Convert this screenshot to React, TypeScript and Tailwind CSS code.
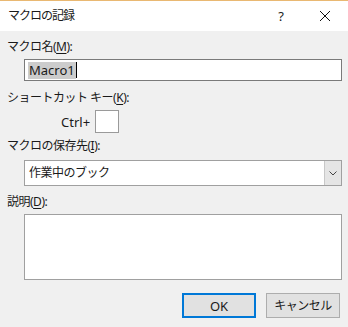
import React from 'react';

const font = { fontFamily: '"Noto Sans", "Noto Sans CJK JP", sans-serif' };

const U: React.FC<{ c: string }> = ({ c }) => <span className="underline underline-offset-2">{c}</span>;

const App: React.FC = () => {
    return (
        <div className="w-[348px] h-[327px] bg-[#f0f0f0] text-[12px] leading-[16px] text-[#1a1a1a] overflow-hidden" style={font}>
            {/* title bar */}
            <div className="h-[31px] bg-white border-t border-[#e9b872] flex items-center pl-[8px]">
                <span className="flex-1 tracking-[-1px]">マクロの記録</span>
                <span className="w-[16px] text-center mr-[30px] text-[13px]">?</span>
                <svg width="12" height="12" viewBox="0 0 12 12" className="mr-[17px]">
                    <path d="M1 1L11 11M11 1L1 11" stroke="#111" strokeWidth="1" />
                </svg>
            </div>

            <div className="px-[7px]">
                <div className="mt-[8px] tracking-[-0.5px]">マクロ名(<U c="M" />):</div>
                <div className="mt-[4px] ml-[17px] w-[318px] h-[22px] bg-white border border-[#7a7a7a] flex items-center pl-[3px]">
                    <span className="bg-[#cccccc] leading-[17px] px-[1px] text-[13px]">Macro1</span>
                    <span className="w-[1px] h-[16px] bg-black"></span>
                </div>

                <div className="mt-[9px] tracking-[-0.5px]">ショートカット キー(<U c="K" />):</div>
                <div className="mt-[4px] flex items-center">
                    <span className="ml-[54px] w-[34px] text-[13px]">Ctrl+</span>
                    <div className="w-[24px] h-[23px] bg-white border border-[#9a9a9a]"></div>
                </div>

                <div className="mt-[5px] tracking-[-0.5px]">マクロの保存先(<U c="I" />):</div>
                <div className="mt-[6px] ml-[17px] w-[318px] h-[26px] bg-white border border-[#a0a0a0] flex items-stretch">
                    <span className="flex-1 pl-[4px] flex items-center tracking-[-0.5px]">作業中のブック</span>
                    <div className="w-[17px] bg-[#e5e5e5] border-l border-[#c8c8c8] flex items-center justify-center">
                        <svg width="8" height="5" viewBox="0 0 8 5">
                            <path d="M0.5 0.5L4 4L7.5 0.5" stroke="#444" strokeWidth="1" fill="none" />
                        </svg>
                    </div>
                </div>

                <div className="mt-[8px] tracking-[-0.5px]">説明(<U c="D" />):</div>
                <div className="mt-[4px] ml-[17px] w-[318px] h-[66px] bg-white border border-[#a0a0a0]"></div>

                <div className="mt-[13px] flex justify-end gap-[10px] pr-[1px]">
                    <button className="w-[74px] h-[25px] bg-[#e1e1e1] border-2 border-[#0078d7] flex items-center justify-center text-[13px]">OK</button>
                    <button className="w-[74px] h-[25px] bg-[#e1e1e1] border border-[#adadad] flex items-center justify-center tracking-[-0.5px]">キャンセル</button>
                </div>
            </div>
        </div>
    );
};

export default App;
